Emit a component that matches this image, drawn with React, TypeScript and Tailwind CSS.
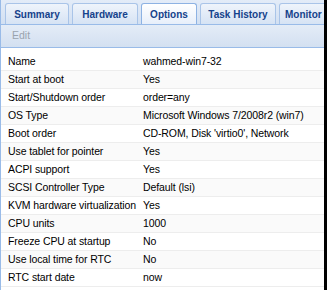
import React from "react";

const tabs: [string, string][] = [
  ["Summary", "w-[64px] justify-center"],
  ["Hardware", "w-[66px] justify-center"],
  ["Options", "w-[56px] justify-center"],
  ["Task History", "w-[76px] justify-center"],
  ["Monitor", "w-[60px] pl-[5px]"],
];

const rows: [string, string][] = [
  ["Name", "wahmed-win7-32"],
  ["Start at boot", "Yes"],
  ["Start/Shutdown order", "order=any"],
  ["OS Type", "Microsoft Windows 7/2008r2 (win7)"],
  ["Boot order", "CD-ROM, Disk 'virtio0', Network"],
  ["Use tablet for pointer", "Yes"],
  ["ACPI support", "Yes"],
  ["SCSI Controller Type", "Default (lsi)"],
  ["KVM hardware virtualization", "Yes"],
  ["CPU units", "1000"],
  ["Freeze CPU at startup", "No"],
  ["Use local time for RTC", "No"],
  ["RTC start date", "now"],
];

export default function App() {
  return (
    <div className="flex h-[290px] w-[327px] overflow-hidden bg-black font-['Liberation_Sans',Arial,sans-serif]">
      <div className="flex w-[324px] flex-col overflow-hidden border-l border-[#99bbe8] bg-white">
        {/* tab strip */}
        <div className="flex h-[25px] shrink-0 items-end gap-[3px] overflow-hidden border-b border-[#99bbe8] bg-gradient-to-b from-[#e3ecf8] to-[#d2e0f2] pl-[4px]">
          {tabs.map(([t, w]) => {
            const active = t === "Options";
            return (
              <div
                key={t}
                className={`flex h-[21px] shrink-0 items-center rounded-t-[3px] border border-b-0 text-[10px] font-bold text-[#15428b] ${w} ${
                  active
                    ? "-mb-px h-[22px] border-[#8db2e3] bg-gradient-to-b from-white to-[#e6eefa]"
                    : "border-[#a9c4e8] bg-gradient-to-b from-[#eff4fb] to-[#d6e3f4]"
                }`}
              >
                {t}
              </div>
            );
          })}
        </div>
        {/* toolbar */}
        <div className="flex h-[23px] shrink-0 items-center border-b border-[#99bbe8] bg-gradient-to-b from-[#e4ecf7] to-[#d3e0f1] pl-[11px] text-[10.5px] text-[#9aa3ae]">
          Edit
        </div>
        {/* grid */}
        <div className="flex flex-col pt-[5px]">
          {rows.map(([k, v], i) => (
            <div
              key={k}
              className={`flex h-[18px] shrink-0 items-center border-b border-[#ededed] text-[10.5px] tracking-[-0.1px] text-black ${
                i % 2 === 1 ? "bg-[#fafafa]" : "bg-white"
              }`}
            >
              <div className="w-[142px] shrink-0 overflow-hidden pl-[7px] whitespace-nowrap">{k}</div>
              <div className="whitespace-nowrap">{v}</div>
            </div>
          ))}
        </div>
      </div>
    </div>
  );
}
